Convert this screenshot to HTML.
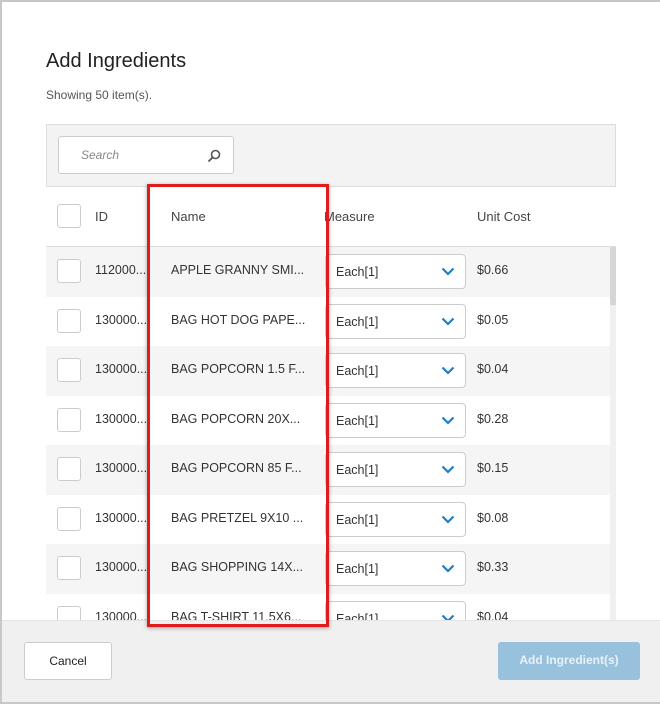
<!DOCTYPE html>
<html><head><style>
*{box-sizing:border-box;margin:0;padding:0}
body{width:660px;height:704px;overflow:hidden;background:#fff;font-family:"Liberation Sans",sans-serif;color:#333;position:relative}
.frame{position:absolute;left:0;top:0;width:660px;height:704px;border:2px solid #c8c8c8;border-right:none}
.abs{position:absolute}
h1{position:absolute;left:46px;top:50px;font-size:20px;font-weight:normal;color:#222}
.sub{left:46px;top:88px;font-size:12px;color:#555}
.tool{left:46px;top:124px;width:570px;height:63px;background:#f3f3f3;border:1px solid #ddd}
.search{left:58px;top:136px;width:176px;height:38px;background:#fff;border:1px solid #ccc;border-radius:3px;font-size:12px;font-style:italic;color:#888;padding:11px 0 0 22px}
.hdr{top:209px;font-size:13px;color:#444}
.cb{width:24px;height:24px;border:1px solid #ccc;border-radius:3px;background:#fff}
.row{left:46px;width:564px;height:50px}
.row span{position:absolute;top:16px;font-size:12.5px;color:#333}
.sel{position:absolute;left:279px;top:7px;width:141px;height:35px;border:1px solid #ccc;border-radius:4px;background:#fff;font-size:12.5px;padding:10px 0 0 10px}
.sel svg{position:absolute;right:10px;top:12px}
.foot{left:0;top:620px;width:660px;height:84px;background:#f0f0f0;border-top:1px solid #e4e4e4}
.btn{top:642px;height:38px;border-radius:3px;font-size:12px;text-align:center;line-height:36px}
</style></head><body>
<h1>Add Ingredients</h1>
<div class="abs sub">Showing 50 item(s).</div>
<div class="abs tool"></div>
<div class="abs search">Search
<svg class="abs" style="left:148px;top:12px" width="14" height="14" viewBox="0 0 14 14"><circle cx="8.5" cy="5.5" r="4" fill="none" stroke="#555" stroke-width="1.6"/><line x1="5.5" y1="8.5" x2="1.5" y2="12.5" stroke="#555" stroke-width="1.8"/></svg></div>
<div class="abs cb" style="left:57px;top:204px"></div>
<div class="abs hdr" style="left:95px">ID</div>
<div class="abs hdr" style="left:171px">Name</div>
<div class="abs hdr" style="left:324px">Measure</div>
<div class="abs hdr" style="left:477px">Unit Cost</div>
<div class="abs" style="left:46px;top:246px;width:570px;height:1px;background:#ddd"></div>
<div id="rows"></div>
<div class="abs" style="left:610px;top:247px;width:6px;height:380px;background:#f0f0f0"></div>
<div class="abs" style="left:610px;top:247px;width:6px;height:58px;background:#d6d6d6"></div>
<div class="abs foot"></div>
<div class="abs btn" style="left:24px;width:88px;background:#fff;border:1px solid #ccc;color:#222">Cancel</div>
<div class="abs btn" style="left:498px;width:142px;background:#97c1dc;color:#e8f2f9;font-weight:bold">Add Ingredient(s)</div>
<div class="abs" style="left:147px;top:184px;width:182px;height:443px;border:3px solid #e01b1b;box-shadow:0 1px 4px rgba(0,0,0,.35)"></div>
<div class="frame"></div>
<script>
var d=[["112000...","APPLE GRANNY SMI...","$0.66"],["130000...","BAG HOT DOG PAPE...","$0.05"],["130000...","BAG POPCORN 1.5 F...","$0.04"],["130000...","BAG POPCORN 20X...","$0.28"],["130000...","BAG POPCORN 85 F...","$0.15"],["130000...","BAG PRETZEL 9X10 ...","$0.08"],["130000...","BAG SHOPPING 14X...","$0.33"],["130000...","BAG T-SHIRT 11.5X6...","$0.04"]];
var h="";d.forEach(function(r,i){var t=247+i*49.5;var hh=Math.min(50,620-t);
h+='<div class="abs row" style="top:'+t+'px;height:'+hh+'px;overflow:hidden;background:'+(i%2?'#fff':'#f5f5f5')+'"><div class="abs cb" style="left:11px;top:12px"></div><span style="left:49px">'+r[0]+'</span><span style="left:125px">'+r[1]+'</span><div class="sel">Each[1]<svg width="14" height="9" viewBox="0 0 14 9"><path d="M1.5 1.5 L7 7 L12.5 1.5" fill="none" stroke="#1f7fc4" stroke-width="2.2"/></svg></div><span style="left:431px">'+r[2]+'</span></div>';});
document.getElementById("rows").innerHTML=h;
</script>
</body></html>
